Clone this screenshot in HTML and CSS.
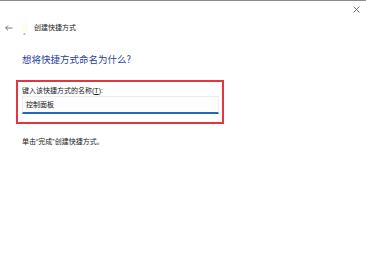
FILE: index.html
```html
<!DOCTYPE html>
<html lang="zh-CN">
<head>
<meta charset="utf-8">
<link rel="stylesheet" href="styles.css">
</head>
<body>
<div class="window">
  <div class="titlebar">
    <span class="close">
      <svg width="7" height="7" viewBox="0 0 7 7"><path d="M0.5 0.5 L6.5 6.5 M6.5 0.5 L0.5 6.5" stroke="#555" stroke-width="0.8" fill="none"/></svg>
    </span>
  </div>
  <div class="nav">
    <span class="back">
      <svg width="8" height="6" viewBox="0 0 8 6"><path d="M7.5 3 H0.8 M3 0.6 L0.6 3 L3 5.4" stroke="#555" stroke-width="0.8" fill="none"/></svg>
    </span>
    <span class="appicon">
      <svg width="7" height="14" viewBox="0 0 7 14"><rect x="0" y="1" width="7" height="11" fill="#fefcf3"/><rect x="2.5" y="12" width="2" height="2" fill="#b4c6e2"/></svg>
    </span>
    <span class="wtitle">创建快捷方式</span>
  </div>
  <div class="content">
    <h1 class="heading">想将快捷方式命名为什么?</h1>
    <div class="namebox">
      <div class="label">键入该快捷方式的名称(<u>T</u>):</div>
      <div class="field">控制面板</div>
    </div>
    <p class="hint">单击“完成”创建快捷方式。</p>
  </div>
</div>
</body>
</html>
```

FILE: styles.css
```css
html, body {
  margin: 0;
  padding: 0;
  background: #ffffff;
}
body {
  font-family: "Liberation Sans", "Noto Sans CJK SC", sans-serif;
  color: #1a1a1a;
}
.window {
  width: 366px;
  height: 261px;
  box-sizing: border-box;
  border-top: 1px solid #8c8c8c;
  background: #ffffff;
}
.titlebar {
  height: 16px;
  display: flex;
  justify-content: flex-end;
  align-items: center;
  padding-right: 6px;
}
.close {
  display: flex;
  width: 7px;
  height: 7px;
}
.nav {
  display: flex;
  align-items: center;
  height: 21px;
  padding-left: 5px;
}
.back {
  display: flex;
  width: 8px;
  height: 6px;
  margin-right: 8px;
}
.appicon {
  display: flex;
  width: 7px;
  height: 14px;
  margin-right: 6px;
}
.wtitle {
  font-size: 7px;
  line-height: 9px;
  color: #222;
}
.content {
  padding-left: 16px;
  padding-top: 15px;
}
.heading {
  margin: 0 0 0 6px;
  font-family: "Noto Sans CJK SC", sans-serif;
  font-size: 9.5px;
  line-height: 13px;
  font-weight: normal;
  color: #1f3f9c;
}
.namebox {
  margin-top: 14px;
  width: 208px;
  height: 44px;
  box-sizing: border-box;
  border: 2px solid #e2373e;
  padding: 4px 3px 0 4px;
}
.label {
  font-size: 7px;
  line-height: 9px;
  color: #1a1a1a;
}
.label u {
  text-decoration: underline;
}
.field {
  margin-top: 1px;
  height: 18px;
  box-sizing: border-box;
  border: 1px solid #ececec;
  border-bottom: 2px solid #1e6ab8;
  background: #fdfdfd;
  font-size: 7px;
  line-height: 15px;
  padding-left: 3px;
  color: #111;
}
.hint {
  margin: 13px 0 0 6px;
  font-size: 7px;
  line-height: 9px;
  color: #1a1a1a;
}
```
